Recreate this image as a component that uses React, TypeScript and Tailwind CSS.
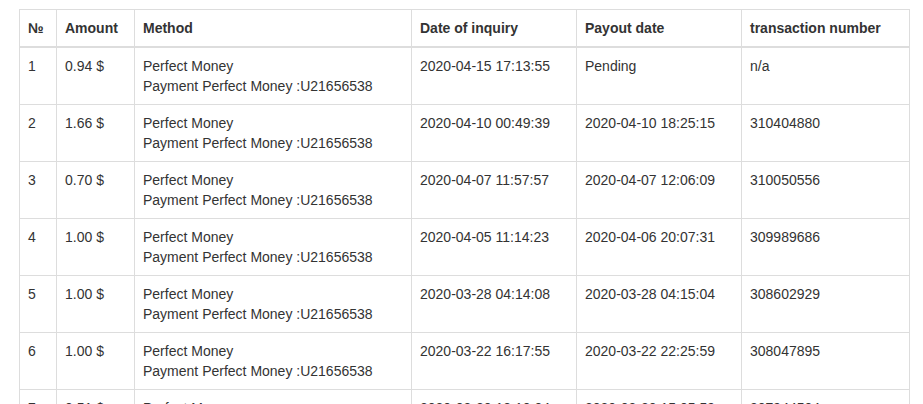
const rows = [
  { n: 1, amount: '0.94 $', inquiry: '2020-04-15 17:13:55', payout: 'Pending', tx: 'n/a' },
  { n: 2, amount: '1.66 $', inquiry: '2020-04-10 00:49:39', payout: '2020-04-10 18:25:15', tx: '310404880' },
  { n: 3, amount: '0.70 $', inquiry: '2020-04-07 11:57:57', payout: '2020-04-07 12:06:09', tx: '310050556' },
  { n: 4, amount: '1.00 $', inquiry: '2020-04-05 11:14:23', payout: '2020-04-06 20:07:31', tx: '309989686' },
  { n: 5, amount: '1.00 $', inquiry: '2020-03-28 04:14:08', payout: '2020-03-28 04:15:04', tx: '308602929' },
  { n: 6, amount: '1.00 $', inquiry: '2020-03-22 16:17:55', payout: '2020-03-22 22:25:59', tx: '308047895' },
  { n: 7, amount: '0.51 $', inquiry: '2020-03-20 13:10:04', payout: '2020-03-20 15:05:59', tx: '307944504' },
]

const cell = 'border border-[#ddd] px-2 py-2 align-top text-left'

export default function App() {
  return (
    <div className="h-[404px] overflow-hidden bg-white pl-[19px] pt-[9px] font-['Liberation_Sans',Arial,sans-serif] text-[14px] leading-[20px] text-[#333]">
      <table className="w-[890px] table-fixed border-collapse">
        <colgroup>
          <col className="w-[37px]" />
          <col className="w-[78px]" />
          <col className="w-[277px]" />
          <col className="w-[165px]" />
          <col className="w-[165px]" />
          <col className="w-[168px]" />
        </colgroup>
        <thead>
          <tr>
            {['№', 'Amount', 'Method', 'Date of inquiry', 'Payout date', 'transaction number'].map((h) => (
              <th key={h} className={`${cell} border-b-2 font-bold`}>
                {h}
              </th>
            ))}
          </tr>
        </thead>
        <tbody>
          {rows.map((r) => (
            <tr key={r.n}>
              <td className={cell}>{r.n}</td>
              <td className={cell}>{r.amount}</td>
              <td className={cell}>
                Perfect Money
                <br />
                Payment Perfect Money :U21656538
              </td>
              <td className={cell}>{r.inquiry}</td>
              <td className={cell}>{r.payout}</td>
              <td className={cell}>{r.tx}</td>
            </tr>
          ))}
        </tbody>
      </table>
    </div>
  )
}
